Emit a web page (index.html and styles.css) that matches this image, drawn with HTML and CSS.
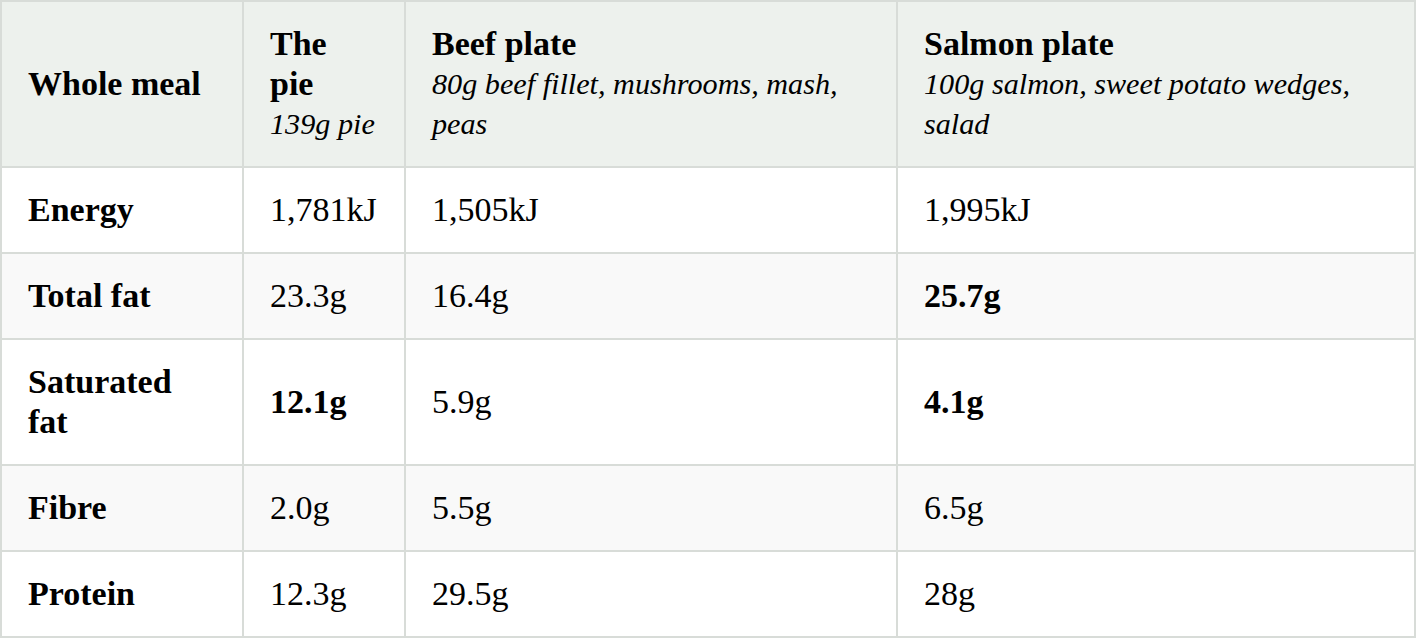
FILE: index.html
```html
<!DOCTYPE html>
<html lang="en">
<head>
<meta charset="utf-8">
<title>Whole meal nutrition</title>
<link rel="stylesheet" href="styles.css">
</head>
<body>
<table class="nutrition">
  <thead>
    <tr>
      <th class="col-label">Whole meal</th>
      <th class="col-pie">The pie<span class="sub">139g pie</span></th>
      <th class="col-beef">Beef plate<span class="sub">80g beef fillet, mushrooms, mash, peas</span></th>
      <th class="col-salmon">Salmon plate<span class="sub">100g salmon, sweet potato wedges, salad</span></th>
    </tr>
  </thead>
  <tbody>
    <tr>
      <th>Energy</th>
      <td>1,781kJ</td>
      <td>1,505kJ</td>
      <td>1,995kJ</td>
    </tr>
    <tr>
      <th>Total fat</th>
      <td>23.3g</td>
      <td>16.4g</td>
      <td><strong>25.7g</strong></td>
    </tr>
    <tr>
      <th>Saturated fat</th>
      <td><strong>12.1g</strong></td>
      <td>5.9g</td>
      <td><strong>4.1g</strong></td>
    </tr>
    <tr>
      <th>Fibre</th>
      <td>2.0g</td>
      <td>5.5g</td>
      <td>6.5g</td>
    </tr>
    <tr>
      <th>Protein</th>
      <td>12.3g</td>
      <td>29.5g</td>
      <td>28g</td>
    </tr>
  </tbody>
</table>
</body>
</html>
```
FILE: styles.css
```css
html, body {
  margin: 0;
  padding: 0;
  background: #ffffff;
}

.nutrition {
  width: 1416px;
  table-layout: fixed;
  border-collapse: separate;
  border-spacing: 0;
  border-top: 2px solid #d8dcd8;
  border-left: 2px solid #d8dcd8;
  font-family: "Liberation Serif", "Times New Roman", serif;
  font-size: 34px;
  line-height: 40px;
  color: #000000;
}

.nutrition th,
.nutrition td {
  box-sizing: border-box;
  padding: 22px 26px;
  border-right: 2px solid #d8dcd8;
  border-bottom: 2px solid #d8dcd8;
  vertical-align: middle;
  text-align: left;
}

.nutrition th {
  font-weight: bold;
}

.nutrition td {
  font-weight: normal;
}

.nutrition thead th {
  background: #edf1ed;
}

.nutrition tbody tr:nth-child(even) {
  background: #f9f9f9;
}

.col-label { width: 242px; }
.col-pie { width: 162px; }
.col-beef { width: 492px; }
.col-salmon { width: 518px; }

.sub {
  display: block;
  font-style: italic;
  font-weight: normal;
  font-size: 30.2px;
  line-height: 40px;
}
```
